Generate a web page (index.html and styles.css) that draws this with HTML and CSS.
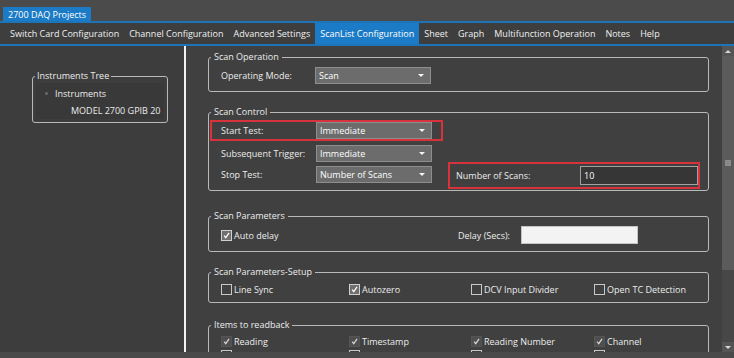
FILE: index.html
```html
<!DOCTYPE html>
<html>
<head>
<meta charset="utf-8">
<title>2700 DAQ Projects</title>
<link rel="stylesheet" href="styles.css">
</head>
<body>
<div class="app">
  <div class="titlebar"><div class="doc-tab">2700 DAQ Projects</div></div>
  <nav class="menubar">
    <span class="menu-item">Switch Card Configuration</span>
    <span class="menu-item">Channel Configuration</span>
    <span class="menu-item">Advanced Settings</span>
    <span class="menu-item active">ScanList Configuration</span>
    <span class="menu-item">Sheet</span>
    <span class="menu-item">Graph</span>
    <span class="menu-item">Multifunction Operation</span>
    <span class="menu-item">Notes</span>
    <span class="menu-item">Help</span>
  </nav>
  <div class="main">
    <aside class="left">
      <fieldset class="group tree-group">
        <legend>Instruments Tree</legend>
        <div class="tree">
          <div class="tree-node"><span class="bullet"></span>Instruments</div>
          <div class="tree-node child">MODEL 2700 GPIB 20</div>
        </div>
      </fieldset>
    </aside>
    <div class="splitter"></div>
    <section class="right">
      <div class="content">
        <fieldset class="group g-operation">
          <legend>Scan Operation</legend>
          <div class="row">
            <span class="label">Operating Mode:</span>
            <div class="combo">Scan</div>
          </div>
        </fieldset>

        <fieldset class="group g-control">
          <legend>Scan Control</legend>
          <div class="row highlight">
            <span class="label">Start Test:</span>
            <div class="combo">Immediate</div>
          </div>
          <div class="row row-gap">
            <span class="label">Subsequent Trigger:</span>
            <div class="combo">Immediate</div>
          </div>
          <div class="row row-stop">
            <div class="stop-part">
              <span class="label">Stop Test:</span>
              <div class="combo">Number of Scans</div>
            </div>
            <div class="scans-box">
              <span class="scans-label">Number of Scans:</span>
              <div class="text-input dark">10</div>
            </div>
          </div>
        </fieldset>

        <fieldset class="group g-params">
          <legend>Scan Parameters</legend>
          <div class="row">
            <label class="check-item wide"><span class="check on"><svg viewBox="0 0 11 11"><path d="M2.6 5.6 L4.6 8.2 L8.6 2.4"/></svg></span>Auto delay</label>
            <span class="delay-label">Delay (Secs):</span>
            <div class="text-input light"></div>
          </div>
        </fieldset>

        <fieldset class="group g-setup">
          <legend>Scan Parameters-Setup</legend>
          <div class="check-grid">
            <label class="check-item"><span class="check"></span>Line Sync</label>
            <label class="check-item"><span class="check on"><svg viewBox="0 0 11 11"><path d="M2.6 5.6 L4.6 8.2 L8.6 2.4"/></svg></span>Autozero</label>
            <label class="check-item"><span class="check"></span>DCV Input Divider</label>
            <label class="check-item"><span class="check"></span>Open TC Detection</label>
          </div>
        </fieldset>

        <fieldset class="group g-readback">
          <legend>Items to readback</legend>
          <div class="check-grid tight">
            <label class="check-item"><span class="check dim"><svg viewBox="0 0 11 11"><path d="M2.6 5.6 L4.6 8.2 L8.6 2.4"/></svg></span>Reading</label>
            <label class="check-item"><span class="check dim"><svg viewBox="0 0 11 11"><path d="M2.6 5.6 L4.6 8.2 L8.6 2.4"/></svg></span>Timestamp</label>
            <label class="check-item"><span class="check dim"><svg viewBox="0 0 11 11"><path d="M2.6 5.6 L4.6 8.2 L8.6 2.4"/></svg></span>Reading Number</label>
            <label class="check-item"><span class="check dim"><svg viewBox="0 0 11 11"><path d="M2.6 5.6 L4.6 8.2 L8.6 2.4"/></svg></span>Channel</label>
            <span class="check-item"><span class="check"></span></span>
            <span class="check-item"><span class="check"></span></span>
            <span class="check-item"><span class="check"></span></span>
            <span class="check-item"><span class="check"></span></span>
          </div>
        </fieldset>
      </div>
      <div class="scrollbar">
        <div class="sb-btn up"></div>
        <div class="sb-thumb"><span class="grip"></span></div>
        <div class="sb-track"></div>
        <div class="sb-btn down"></div>
      </div>
    </section>
  </div>
  <div class="statusbar"></div>
</div>
</body>
</html>
```

FILE: styles.css
```css
* { box-sizing: border-box; }
html, body { margin: 0; padding: 0; }
body {
  width: 734px;
  height: 358px;
  overflow: hidden;
  background: #3f3f3f;
  font-family: "Open Sans", "Noto Sans", sans-serif;
  font-size: 9px;
  color: #ececec;
}
.app { display: flex; flex-direction: column; height: 358px; }

.titlebar {
  height: 21px;
  background: #4b4b4b;
  padding: 7px 0 0 3px;
}
.doc-tab {
  width: 88px;
  height: 14px;
  background: #1c7bc6;
  color: #fff;
  line-height: 15px;
  padding-left: 5px;
  white-space: nowrap;
}

.menubar {
  height: 25px;
  border-top: 2px solid #1d74b8;
  border-bottom: 2px solid #1d74b8;
  background: #3e3e3e;
  display: flex;
  padding-left: 5px;
}
.menu-item {
  padding: 1px 5px 0;
  line-height: 20px;
  white-space: nowrap;
  color: #f0f0f0;
}
.menu-item.active { background: #1c7bc6; color: #fff; }

.main { display: flex; height: 306px; }
.left {
  width: 184px;
  background: #3d3d3d;
  padding: 23px 0 0 32px;
}
.splitter { width: 2px; background: #f2f2f2; }
.right { flex: 1; display: flex; min-width: 0; }
.content {
  flex: 1;
  overflow: hidden;
  padding: 4px 0 0 22px;
  background: #404040;
}

.group {
  margin: 0;
  min-width: 0;
  border: 1px solid #b9b9b9;
  border-radius: 3px;
  padding: 0 12px;
  width: 501px;
}
.group legend {
  padding: 0 3px;
  margin-left: -10px;
  line-height: 14px;
  color: #ececec;
}

.tree-group {
  width: 136px;
  padding: 0 3px 3px 3px;
}
.tree-group legend { margin-left: -1px; padding: 0 2px; }
.tree { background: #393939; padding-top: 2px; }
.tree-node {
  height: 17px;
  line-height: 17px;
  padding-left: 19px;
  display: flex;
  align-items: center;
  white-space: nowrap;
}
.tree-node .bullet {
  width: 3px; height: 3px;
  background: #6a6a6a;
  border-radius: 50%;
  margin: 0 7px 0 -10px;
}
.tree-node.child { padding-left: 35px; }

.row { display: flex; align-items: center; height: 17px; white-space: nowrap; }
.label { width: 95px; }
.combo {
  position: relative;
  width: 116px;
  height: 17px;
  background: #6c6c6c;
  border: 1px solid #8e8e8e;
  color: #fff;
  padding-left: 3px;
  line-height: 15px;
}
.combo::after {
  content: "";
  position: absolute;
  right: 6px;
  top: 6px;
  border-left: 3px solid transparent;
  border-right: 3px solid transparent;
  border-top: 3px solid #f4f4f4;
}

.g-operation { padding-top: 3px; padding-bottom: 7px; }
.g-operation .label { width: 94px; }

.g-control { margin-top: 13px; padding-top: 1px; padding-bottom: 1px; }
.highlight {
  height: 21px;
  border: 2px solid #d8333c;
  margin-left: -11px;
  width: 233px;
  padding-left: 9px;
}
.row-gap { margin-top: 4px; }
.row-stop { height: 27px; align-items: flex-start; }
.stop-part { display: flex; align-items: center; margin-top: 4px; }
.scans-box {
  margin-left: 16px;
  width: 259px;
  height: 27px;
  border: 2px solid #d8333c;
  display: flex;
  align-items: center;
  padding-left: 6px;
}
.scans-label { width: 124px; }
.text-input {
  width: 118px;
  height: 19px;
  border: 1px solid #a2a2a2;
  padding-left: 3px;
  line-height: 17px;
}
.text-input.dark { background: #363636; color: #fff; }
.text-input.light { background: #f3f3f3; border-color: #c4c4c4; width: 117px; height: 18px; }

.g-params { margin-top: 18px; padding-top: 3px; padding-bottom: 7px; }
.g-params .row { height: 18px; }
.check-item { display: flex; align-items: center; white-space: nowrap; }
.check-item.wide { width: 237px; }
.delay-label { width: 63px; }
.check {
  width: 11px;
  height: 11px;
  border: 1px solid #c9c9c9;
  margin-right: 2px;
  flex: none;
  display: flex;
}
.check svg { width: 9px; height: 9px; }
.check path { fill: none; stroke: #fff; stroke-width: 1.5; }
.check.on { background: #6f6f6f; border-color: #d0d0d0; }
.check.dim { background: #4e4e4e; border-color: #555; }
.check.dim path { stroke: #d6d6d6; }

.g-setup { margin-top: 13px; padding-top: 2px; padding-bottom: 4px; }
.check-grid {
  display: grid;
  grid-template-columns: 128px 122px 123px auto;
  grid-auto-rows: 17px;
  align-items: center;
}
.check-grid.tight { grid-auto-rows: 14px; }
.g-readback { margin-top: 15px; padding-top: 2px; padding-bottom: 6px; }

.scrollbar {
  width: 12px;
  display: flex;
  flex-direction: column;
  background: #474747;
}
.sb-btn { height: 10px; position: relative; background: #555; }
.sb-btn::after {
  content: "";
  position: absolute;
  left: 3px;
  top: 4px;
  border-left: 3px solid transparent;
  border-right: 3px solid transparent;
}
.sb-btn.up::after { border-bottom: 3px solid #d8d8d8; }
.sb-btn.down::after { border-top: 3px solid #d8d8d8; }
.sb-thumb {
  height: 214px;
  background: #5b5b5b;
  display: flex;
  align-items: center;
  justify-content: center;
}
.grip { width: 6px; height: 6px; background: #8a8a8a; }
.sb-track { flex: 1; background: #474747; }

.statusbar { height: 6px; background: #4a4a4a; }
```
